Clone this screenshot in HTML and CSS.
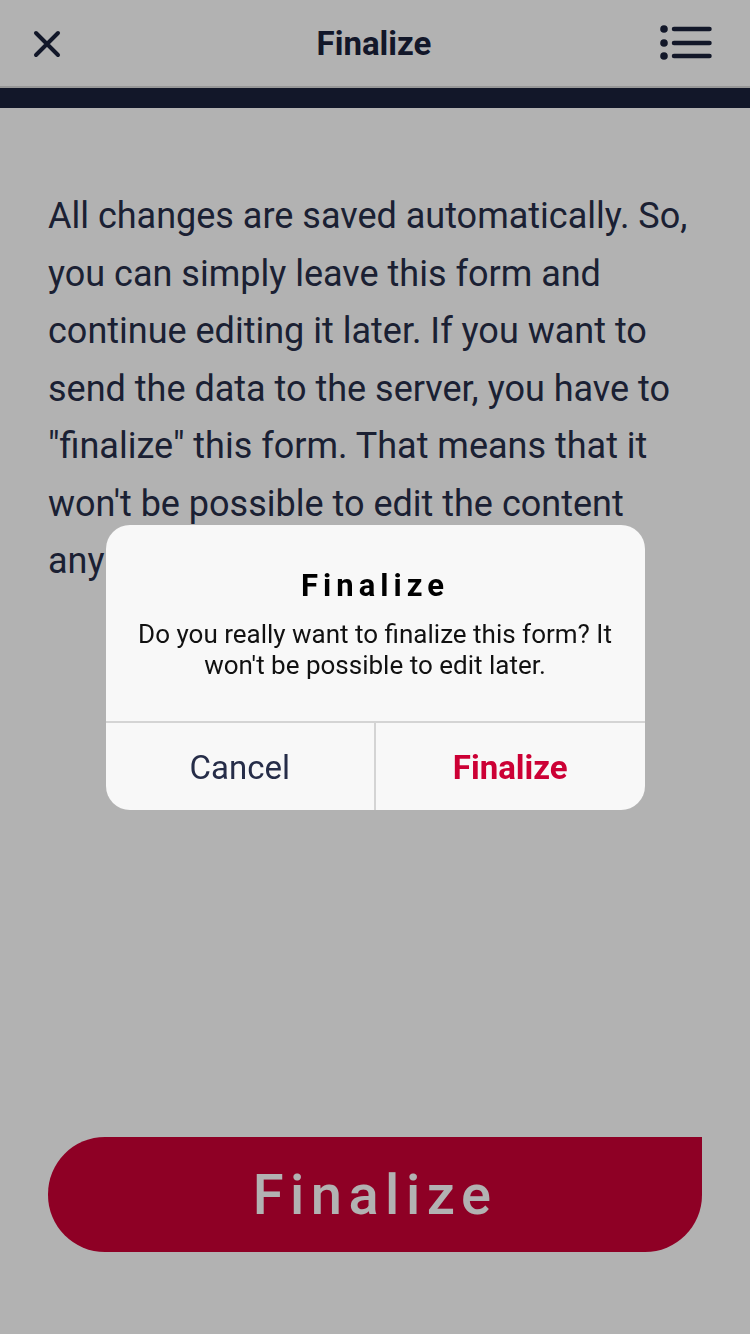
FILE: index.html
```html
<!DOCTYPE html>
<html lang="en">
<head>
<meta charset="utf-8">
<link rel="stylesheet" href="styles.css">
</head>
<body>
<div class="page">
  <header class="topbar">
    <button class="icon-btn close-btn" aria-label="Close">
      <svg width="30" height="30" viewBox="0 0 30 30"><path d="M4 4 L26 26 M26 4 L4 26" stroke="#1a223b" stroke-width="4" stroke-linecap="round" fill="none"/></svg>
    </button>
    <h1 class="title">Finalize</h1>
    <button class="icon-btn menu-btn" aria-label="Menu">
      <svg width="52" height="38" viewBox="0 0 52 38"><g fill="#1a223b"><circle cx="4" cy="5" r="3.8"/><circle cx="4" cy="19" r="3.8"/><circle cx="4" cy="32" r="3.8"/></g><g stroke="#1a223b" stroke-width="4.5" stroke-linecap="round"><path d="M14 5 H49.5 M14 19 H49.5 M14 32 H49.5"/></g></svg>
    </button>
  </header>
  <div class="progress"></div>
  <main class="content">
    <p class="info">All changes are saved automatically. So, you can simply leave this form and continue editing it later. If you want to send the data to the server, you have to "finalize" this form. That means that it won't be possible to edit the content anymore.</p>
    <div class="actions">
      <button class="finalize-btn">Finalize</button>
    </div>
  </main>
</div>
<div class="overlay">
  <div class="dialog" role="dialog">
    <div class="dialog-body">
      <h2 class="dialog-title">Finalize</h2>
      <p class="dialog-msg">Do you really want to finalize this form? It won't be possible to edit later.</p>
    </div>
    <div class="dialog-buttons">
      <button class="dlg-btn cancel">Cancel</button>
      <button class="dlg-btn confirm">Finalize</button>
    </div>
  </div>
</div>
</body>
</html>
```
FILE: styles.css
```css
* { box-sizing: border-box; }
html, body {
  margin: 0;
  padding: 0;
  width: 750px;
  height: 1334px;
  background: #ffffff;
  font-family: Roboto, "Noto Sans", sans-serif;
  overflow: hidden;
}
.page {
  height: 1334px;
  display: flex;
  flex-direction: column;
}
.topbar {
  height: 88px;
  display: flex;
  align-items: center;
  justify-content: space-between;
  padding: 0 36px 0 32px;
  border-bottom: 2px solid #d8d8d8;
}
.icon-btn {
  background: none;
  border: 0;
  padding: 0;
  display: flex;
}
.close-btn { margin-top: 2px; }
.menu-btn { margin-right: 2px; margin-top: 0; }
.title {
  margin: 0;
  font-size: 33px;
  font-weight: 700;
  color: #1a223b;
  margin-top: 1px;
  margin-left: 26px;
}
.progress {
  height: 20px;
  background: #1a223b;
}
.content {
  flex: 1;
  display: flex;
  flex-direction: column;
  padding: 80px 48px 82px 48px;
}
.info {
  margin: 0;
  font-size: 36px;
  line-height: 57.5px;
  color: #272e49;
}
.actions {
  margin-top: auto;
  display: flex;
}
.finalize-btn {
  width: 654px;
  height: 115px;
  border: 0;
  background: #cc0035;
  color: #ffffff;
  font-family: Roboto, sans-serif;
  font-size: 56px;
  font-weight: 500;
  letter-spacing: 6.5px;
  border-radius: 57px 0 57px 57px;
  padding: 0;
}
.overlay {
  position: fixed;
  inset: 0;
  background: rgba(0, 0, 0, 0.3);
  display: flex;
  justify-content: center;
  align-items: flex-start;
  padding-top: 525px;
}
.dialog {
  width: 539px;
  background: #f8f8f8;
  border-radius: 24px;
  overflow: hidden;
}
.dialog-body {
  padding: 41px 18px 40px;
  text-align: center;
}
.dialog-title {
  margin: 0;
  font-size: 31px;
  line-height: 40px;
  font-weight: 700;
  letter-spacing: 5px;
  color: #000;
}
.dialog-msg {
  margin: 13px 0 0;
  font-size: 26px;
  line-height: 31px;
  color: #111;
}
.dialog-buttons {
  display: flex;
  border-top: 2px solid #d4d4d4;
}
.dlg-btn {
  flex: 1;
  height: 87px;
  border: 0;
  background: transparent;
  font-family: Roboto, sans-serif;
  font-size: 33px;
  padding: 1px 0 0;
}
.cancel {
  color: #262d48;
  border-right: 2px solid #d4d4d4;
}
.confirm {
  color: #cc0035;
  font-weight: 700;
}
```
